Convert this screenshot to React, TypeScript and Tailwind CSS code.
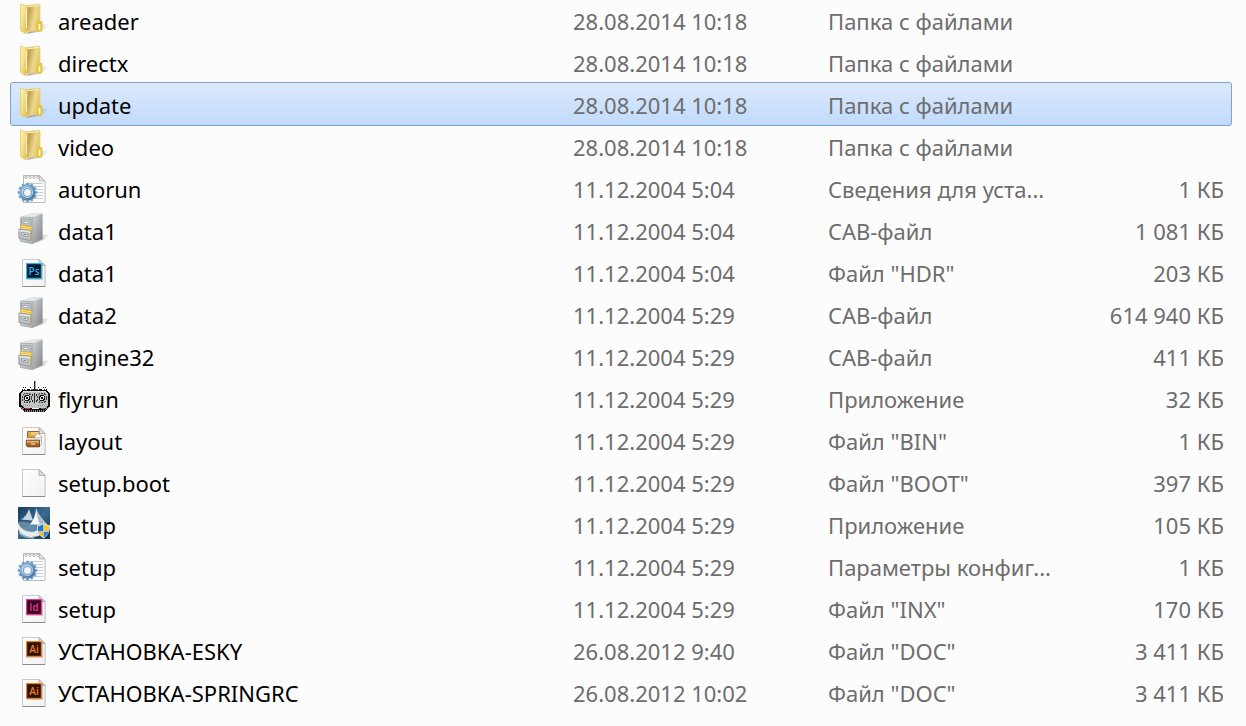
import React from "react";

type IconKind = "folder" | "settings" | "cabinet" | "photoshop" | "radio" | "binary" | "blank" | "installer" | "indesign" | "illustrator";

interface Entry {
  icon: IconKind;
  name: string;
  date: string;
  type: string;
  size?: string;
  selected?: boolean;
}

const entries: Entry[] = [
  { icon: "folder", name: "areader", date: "28.08.2014 10:18", type: "Папка с файлами" },
  { icon: "folder", name: "directx", date: "28.08.2014 10:18", type: "Папка с файлами" },
  { icon: "folder", name: "update", date: "28.08.2014 10:18", type: "Папка с файлами", selected: true },
  { icon: "folder", name: "video", date: "28.08.2014 10:18", type: "Папка с файлами" },
  { icon: "settings", name: "autorun", date: "11.12.2004 5:04", type: "Сведения для уста...", size: "1 КБ" },
  { icon: "cabinet", name: "data1", date: "11.12.2004 5:04", type: "CAB-файл", size: "1 081 КБ" },
  { icon: "photoshop", name: "data1", date: "11.12.2004 5:04", type: 'Файл "HDR"', size: "203 КБ" },
  { icon: "cabinet", name: "data2", date: "11.12.2004 5:29", type: "CAB-файл", size: "614 940 КБ" },
  { icon: "cabinet", name: "engine32", date: "11.12.2004 5:29", type: "CAB-файл", size: "411 КБ" },
  { icon: "radio", name: "flyrun", date: "11.12.2004 5:29", type: "Приложение", size: "32 КБ" },
  { icon: "binary", name: "layout", date: "11.12.2004 5:29", type: 'Файл "BIN"', size: "1 КБ" },
  { icon: "blank", name: "setup.boot", date: "11.12.2004 5:29", type: 'Файл "BOOT"', size: "397 КБ" },
  { icon: "installer", name: "setup", date: "11.12.2004 5:29", type: "Приложение", size: "105 КБ" },
  { icon: "settings", name: "setup", date: "11.12.2004 5:29", type: "Параметры конфиг...", size: "1 КБ" },
  { icon: "indesign", name: "setup", date: "11.12.2004 5:29", type: 'Файл "INX"', size: "170 КБ" },
  { icon: "illustrator", name: "УСТАНОВКА-ESKY", date: "26.08.2012 9:40", type: 'Файл "DOC"', size: "3 411 КБ" },
  { icon: "illustrator", name: "УСТАНОВКА-SPRINGRC", date: "26.08.2012 10:02", type: 'Файл "DOC"', size: "3 411 КБ" },
];

function Gradients() {
  return (
    <svg className="absolute size-0" aria-hidden="true">
      <defs>
        <linearGradient id="folderFront" x1="0" y1="0" x2="1" y2="1">
          <stop offset="0" stopColor="#fdf3b4" />
          <stop offset="0.5" stopColor="#f3de83" />
          <stop offset="1" stopColor="#dfb94a" />
        </linearGradient>
        <linearGradient id="folderBack" x1="0" y1="0" x2="1" y2="0.4">
          <stop offset="0.3" stopColor="#c2a04c" />
          <stop offset="0.7" stopColor="#ecd88d" />
          <stop offset="1" stopColor="#e3c963" />
        </linearGradient>
        <linearGradient id="shade" x1="0" y1="0" x2="1" y2="0">
          <stop offset="0.2" stopColor="#666" stopOpacity="0.55" />
          <stop offset="1" stopColor="#999" stopOpacity="0" />
        </linearGradient>
        <linearGradient id="paper" x1="0" y1="0" x2="1" y2="1">
          <stop offset="0" stopColor="#ffffff" />
          <stop offset="1" stopColor="#f1f1f1" />
        </linearGradient>
        <linearGradient id="cabSide" x1="0" y1="0" x2="1" y2="1">
          <stop offset="0" stopColor="#d3d6d7" />
          <stop offset="0.5" stopColor="#a6aaac" />
          <stop offset="1" stopColor="#7d8285" />
        </linearGradient>
        <linearGradient id="cabFace" x1="0" y1="0" x2="1" y2="1">
          <stop offset="0" stopColor="#e3e6e7" />
          <stop offset="1" stopColor="#a9afb1" />
        </linearGradient>
        <linearGradient id="steel" x1="0" y1="0" x2="1" y2="1">
          <stop offset="0" stopColor="#a4cbea" />
          <stop offset="0.5" stopColor="#6e9fcb" />
          <stop offset="1" stopColor="#4a7198" />
        </linearGradient>
        <linearGradient id="wood" x1="0" y1="0" x2="0" y2="1">
          <stop offset="0" stopColor="#d69a58" />
          <stop offset="1" stopColor="#8c4b16" />
        </linearGradient>
        <linearGradient id="sky" x1="0" y1="0" x2="1" y2="1">
          <stop offset="0" stopColor="#163c5e" />
          <stop offset="0.5" stopColor="#3a6b91" />
          <stop offset="1" stopColor="#123450" />
        </linearGradient>
      </defs>
    </svg>
  );
}

function Page() {
  return (
    <g>
      <path d="M5 5H22.5L27.5 10V32H5Z" fill="#000" opacity="0.12" />
      <path d="M4.5 4.5H21L27 10.5V31.5H4.5Z" fill="url(#paper)" stroke="#bdbdbd" strokeWidth="0.8" />
      <path d="M4.5 31.5H27" stroke="#8a8a8a" />
      <path d="M21 4.5V10.5H27Z" fill="#dcdcdc" stroke="#a8a8a8" strokeWidth="0.8" />
    </g>
  );
}

function AdobeDoc({ label, color, fill }: { label: string; color: string; fill: string }) {
  return (
    <g>
      <Page />
      <rect x="9" y="9" width="16" height="16" fill="#000" opacity="0.18" />
      <rect x="8.6" y="8.6" width="14.8" height="14.8" fill={fill} stroke={color} strokeWidth="1.2" />
      <text x="16" y="19.9" textAnchor="middle" fontSize="10" fontWeight="600" fill={color} fontFamily="'Open Sans', 'Noto Sans', sans-serif">
        {label}
      </text>
    </g>
  );
}

function Folder() {
  return (
    <g>
      <path d="M8 31L19 22L32 20.5L27 25.5L20 29Z" fill="url(#shade)" />
      <path d="M7 3L20.5 1.2Q22 1 22 2.5V27L8 29Z" fill="url(#folderBack)" stroke="#e5cf7d" strokeWidth="0.8" />
      <path d="M8.5 4L20.8 2.4" stroke="#fff5bd" />
      <path d="M19.5 20.5L21.5 18.5H24V28L19.2 28.7Z" fill="#eacb3c" stroke="#d7b733" strokeWidth="0.6" />
      <path d="M21.5 21V26.5" stroke="#fffef0" strokeWidth="1.5" />
      <path d="M2.4 1.5Q2.4 .6 3.3 .9L8 3.2Q9.3 3.8 9.3 5.5L8.3 15V29Q8.3 31 6.8 30.3L3.2 28Q2.4 27.5 2.4 26Z" fill="url(#folderFront)" stroke="#e0c563" strokeWidth="0.7" />
      <path d="M8.7 7L8.5 15V25" stroke="#fffbe4" strokeWidth="0.9" />
    </g>
  );
}

function Settings() {
  const teeth = Array.from({ length: 12 }, (_, i) => i * 30);
  return (
    <g>
      <path d="M5.5 4.5H21.5L27 10V31.5H5.5Z" fill="#fdfdfd" stroke="#a9a9a9" strokeWidth="0.8" />
      <path d="M8 12.5H25M8 15.5H25M8 18.5H25M8 21.5H25M8 24.5H25M8 27.5H25" stroke="#b9cbd8" strokeWidth="0.9" />
      <path d="M21.5 4.5V10H27Z" fill="#e1e1e1" stroke="#aaa" strokeWidth="0.7" />
      <g fill="#fff" stroke="#9a9a9a" strokeWidth="0.7">
        <circle cx="8" cy="6.3" r="1.2" />
        <circle cx="12" cy="6.3" r="1.2" />
        <circle cx="16" cy="6.3" r="1.2" />
        <circle cx="20" cy="6.3" r="1.2" />
      </g>
      <g transform="translate(9.5 21.5)">
        {teeth.map((angle) => (
          <rect key={angle} x="-1.3" y="-9.6" width="2.6" height="4" rx="0.5" fill="#7ba9cf" stroke="#557fa6" strokeWidth="0.3" transform={`rotate(${angle})`} />
        ))}
        <circle r="6" fill="none" stroke="#527da5" strokeWidth="4" />
        <circle r="6" fill="none" stroke="url(#steel)" strokeWidth="3.2" />
        <circle r="5" fill="none" stroke="#c9e2f5" strokeWidth="0.9" />
        <circle r="4" fill="#f2f6f9" stroke="#55789a" strokeWidth="0.6" />
      </g>
    </g>
  );
}

function Cabinet() {
  return (
    <g>
      <path d="M13 31L24.5 22L33 20.5L26 27Z" fill="url(#shade)" />
      <path d="M2.5 4.3L13.5 .7H24.5L14.8 4.5Z" fill="#e7eaea" stroke="#c0c4c5" strokeWidth="0.5" />
      <path d="M14.8 4.5L24.6 .8V26L14.8 30.8Z" fill="url(#cabSide)" />
      <path d="M2.5 4.3L14.8 4.5V30.8L2.5 28.4Z" fill="url(#cabFace)" stroke="#8d9395" strokeWidth="0.6" />
      <path d="M3.5 6L13 6.4V13.3L3.5 12.5Z" fill="#c3c9cb" stroke="#858c8f" strokeWidth="0.7" />
      <path d="M5.8 8.2L10.5 8.6V10.8L5.8 10.4Z" fill="#edf0f0" stroke="#838b90" strokeWidth="0.6" />
      <path d="M2 16V12.8L4 12L14 13.5V25L13 26V17Z" fill="#e9b62b" />
      <path d="M3 13.3L13 14.7M3 15L13 16.5" stroke="#fff0a4" strokeWidth="0.8" />
      <path d="M.9 16L13 17.5V27.5L.9 25.4Z" fill="#bdc3c5" stroke="#7f8689" strokeWidth="0.7" />
      <path d="M1.5 16.7L12.4 18V20L1.5 18.5Z" fill="#e1e5e6" />
      <path d="M3.7 19.5L9.7 20.3V23.5L3.7 22.6Z" fill="#edf0f0" stroke="#7e878b" strokeWidth="0.7" />
      <path d="M5.3 21.2L8.2 21.6" stroke="#737d83" />
    </g>
  );
}

function Gimbal({ x }: { x: number }) {
  return (
    <g transform={`translate(${x} 17)`}>
      <circle r="4.8" fill="#b2b2b2" stroke="#444" strokeDasharray="2 1" />
      <circle r="2.5" fill="#eee" stroke="#111" />
      <rect x="-1" y="-1" width="2" height="2" fill="#000" />
    </g>
  );
}

function Radio() {
  return (
    <g shapeRendering="crispEdges">
      <path d="M16.5 0V9" stroke="#222" />
      <path d="M17.5 0V8" stroke="#aaa" />
      <path d="M4 9H9V8H12V9H21V8H24V9H28L32 12V25L27 31H6L1 26V12Z" fill="#0c0c0c" />
      <path d="M5 10H28L30 13V24L27 27H6L3 24V12Z" fill="#c4c4c4" />
      <path d="M5 10.5H28" stroke="#eee" strokeDasharray="2 1" />
      <path d="M3 26L6 29.5H27L30 26" fill="none" stroke="#888" strokeWidth="2" strokeDasharray="1 1" />
      <path d="M5 6.5H8M12 6.5H14M20 6.5H22M25 6.5H28M4 8.5H7M26 8.5H29" stroke="#222" strokeDasharray="1 1" />
      <Gimbal x={9} />
      <Gimbal x={24} />
      <path d="M16.5 12V22M14.5 13V15M18.5 13V15M14.5 19V21M18.5 19V21" stroke="#222" />
      <path d="M13 8.5H15" stroke="#d22" />
      <path d="M15 8.5H18" stroke="#162bb0" />
      <path d="M18 8.5H20" stroke="#168a28" />
      <path d="M5 24.5H13M20 24.5H28" stroke="#888" strokeDasharray="1 1" />
      <path d="M7 27.5H12" stroke="#d52d35" />
      <path d="M23 27.5H27" stroke="#18a32d" />
      <path d="M14 27.5H21" stroke="#eee" />
    </g>
  );
}

function Binary() {
  return (
    <g>
      <Page />
      <path d="M9.5 8.5H21V15H9.5Z" fill="#d9a64b" stroke="#76501e" strokeWidth="0.8" />
      <path d="M13 9H21V12H13Z" fill="#f3ce72" />
      <path d="M17 12.5L20 10.5L23.5 13V22H17Z" fill="#fff" stroke="#8a8a8a" strokeWidth="0.6" />
      <path d="M18 14.5H23M18 16H23M18 18H23" stroke="#aaa" strokeWidth="0.6" />
      <path d="M8.3 17.2H21.5V23.8H9.5L8.3 22.5Z" fill="url(#wood)" stroke="#703b12" strokeWidth="0.9" />
      <path d="M8.8 18H21V19.3H8.8Z" fill="#e9b779" />
      <path d="M13 21H17" stroke="#f8dbab" strokeWidth="1.2" />
      <path d="M8.8 15.5H17" fill="none" stroke="#fbeac4" />
    </g>
  );
}

function Installer() {
  return (
    <g>
      <rect width="32" height="32" fill="url(#sky)" />
      <path d="M0 15Q8 13 15 18L29 20L22 28Q6 28 0 19Z" fill="#8cabc1" opacity="0.55" />
      <path d="M11 2L15 13.5L3 12.5Q9 9 11 2Z" fill="#c9d7e1" />
      <path d="M18 1Q20 8 29.5 18L12 17.5Q18 10 18 1Z" fill="#f7fafc" />
      <path d="M18 1Q19 11 22 18L29.5 18Q20 9 18 1Z" fill="#aabdcc" />
      <path d="M0 16Q4 25 15 25L28 20Q25 31 11 30Q2 28 0 22Z" fill="#e4ecf1" />
      <path d="M1 26Q7 31 16 31" fill="none" stroke="#9bb5c8" strokeWidth="1.5" />
      <path d="M25.5 16Q28 18 32 18.2Q32.5 27 25.5 31.5Q18.5 27 19 18.2Q23 18 25.5 16Z" fill="#dce3ea" />
      <path d="M25.3 17.2Q22.8 18.8 20 19.2V24.3H25.3Z" fill="#2876d0" />
      <path d="M25.7 17.2Q28 18.8 31 19.2V24.3H25.7Z" fill="#f6cb32" />
      <path d="M20.2 24.7H25.3V30.5Q21.4 28 20.2 24.7Z" fill="#f4bd24" />
      <path d="M25.7 24.7H30.8Q29.6 28 25.7 30.5Z" fill="#2e7fd7" />
    </g>
  );
}

function FileIcon({ kind }: { kind: IconKind }) {
  return (
    <svg viewBox="0 0 32 32" className="size-8 shrink-0 overflow-visible" aria-hidden="true">
      {kind === "folder" && <Folder />}
      {kind === "settings" && <Settings />}
      {kind === "cabinet" && <Cabinet />}
      {kind === "photoshop" && <AdobeDoc label="Ps" color="#25b9ea" fill="#0b172d" />}
      {kind === "radio" && <Radio />}
      {kind === "binary" && <Binary />}
      {kind === "blank" && <Page />}
      {kind === "installer" && <Installer />}
      {kind === "indesign" && <AdobeDoc label="Id" color="#ec3395" fill="#330820" />}
      {kind === "illustrator" && <AdobeDoc label="Ai" color="#f37b20" fill="#2b1308" />}
    </svg>
  );
}

export default function App() {
  return (
    <main className="flow-root min-h-screen bg-[#fcfcfc] pr-[15px] pl-[11px] font-['Noto_Sans','Open_Sans',sans-serif] text-[22px] leading-7">
      <Gradients />
      <table className="-mt-px w-full table-fixed border-separate border-spacing-0 whitespace-nowrap text-left text-[#6d6d6d]">
        <colgroup>
          <col />
          <col className="w-[255px]" />
          <col className="w-[240px]" />
          <col className="w-[163px]" />
        </colgroup>
        <tbody>
          {entries.map((entry, index) => (
            <tr
              key={index}
              aria-selected={entry.selected}
              className={
                entry.selected
                  ? "h-[42px] rounded-xs bg-linear-to-b from-[#dce9fb] to-[#c1dbfc] outline outline-[#7da2ce]"
                  : "h-[42px]"
              }
            >
              <th scope="row" className="p-0 pl-[7px] align-top font-normal text-black">
                <div className="flex gap-2 pt-1">
                  <FileIcon kind={entry.icon} />
                  <span className="pt-1">{entry.name}</span>
                </div>
              </th>
              <td className="p-0 pt-2 align-top">{entry.date}</td>
              <td className="p-0 pt-2 align-top">{entry.type}</td>
              <td className="p-0 pt-2 pr-[7px] text-right align-top">{entry.size}</td>
            </tr>
          ))}
        </tbody>
      </table>
    </main>
  );
}
